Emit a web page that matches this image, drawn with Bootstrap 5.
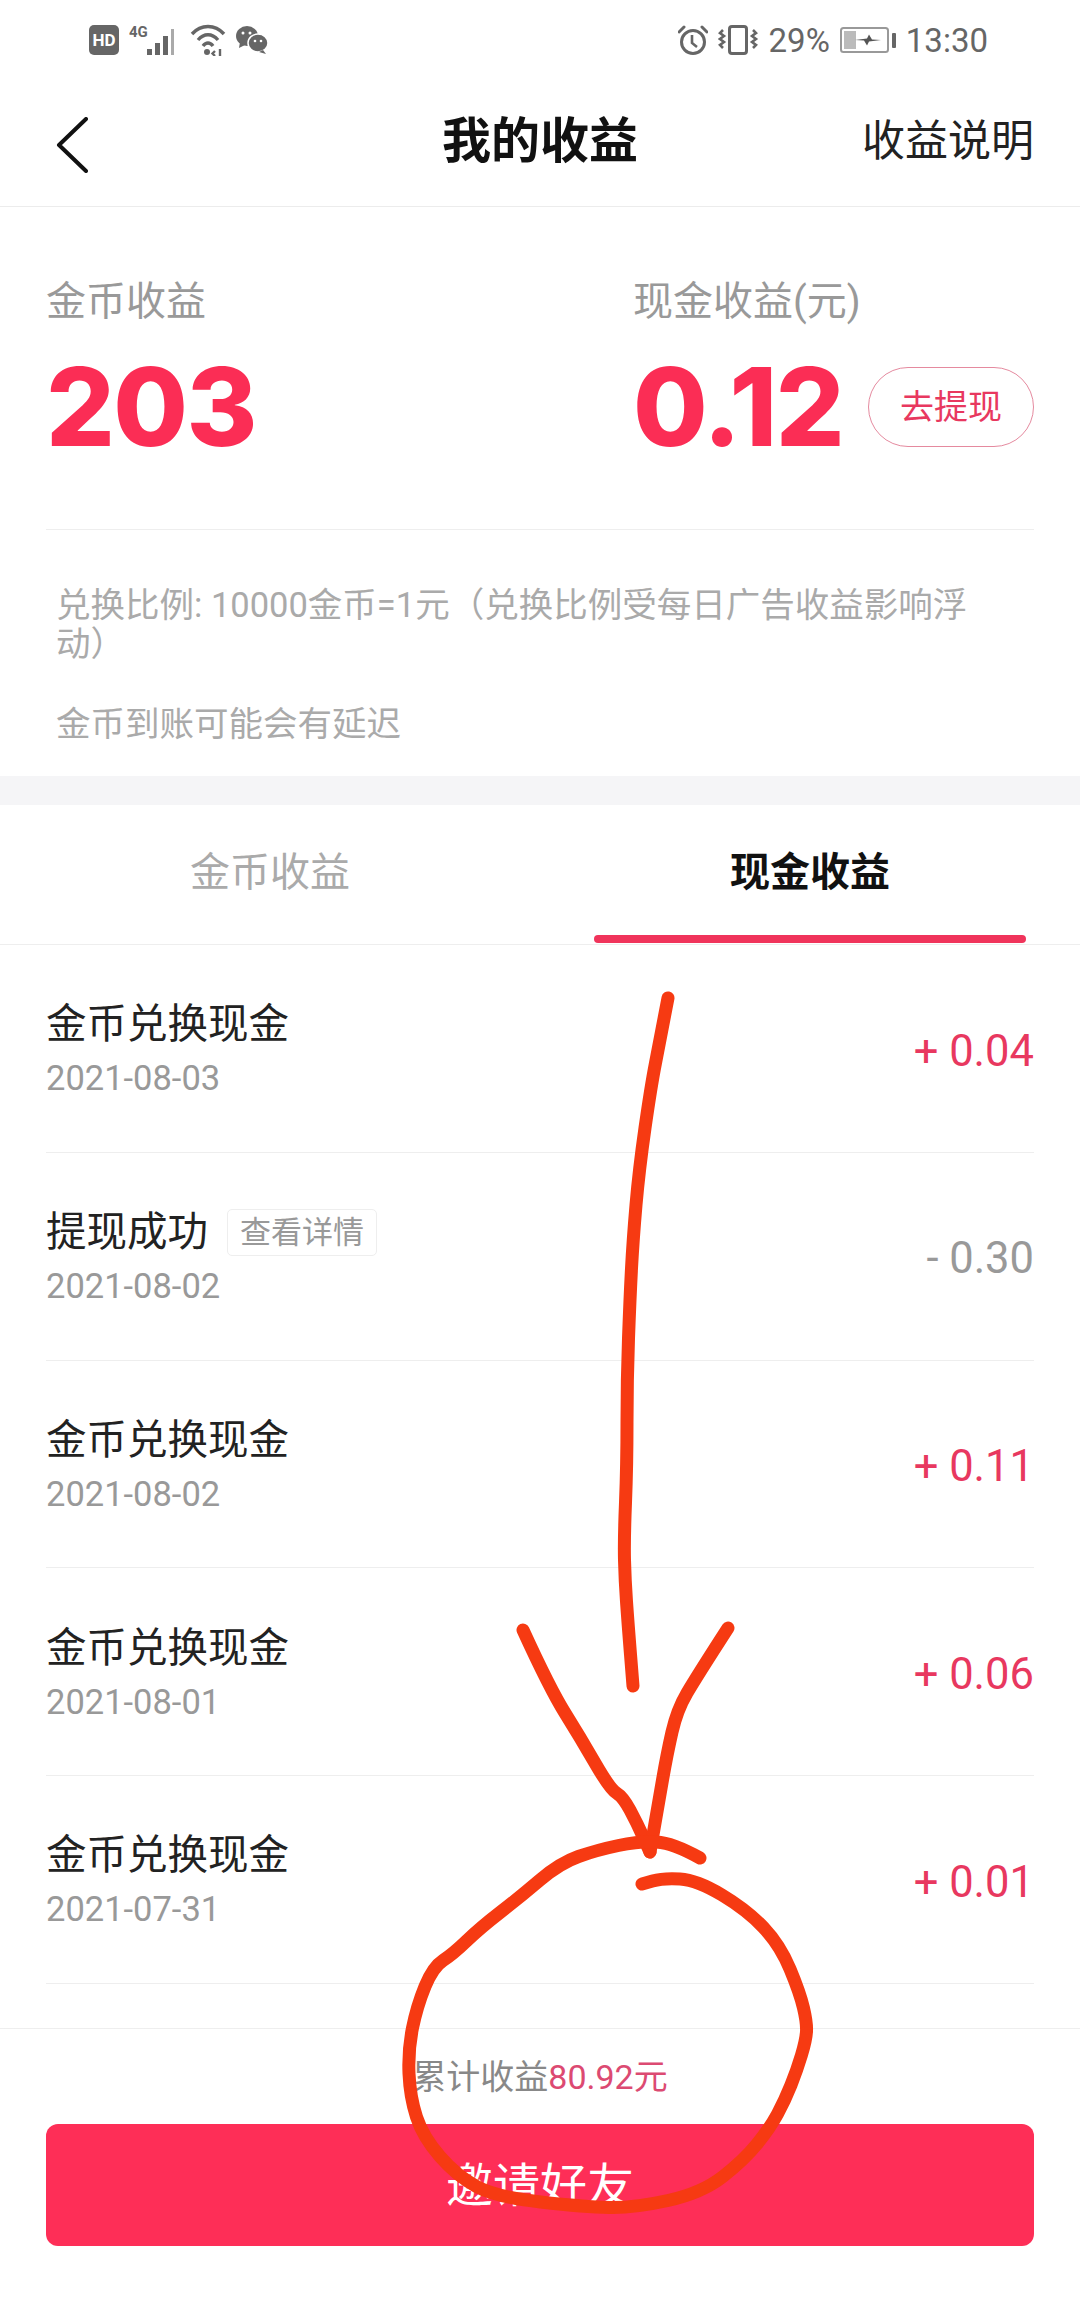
<!DOCTYPE html>
<html lang="zh-CN">
<head>
    <meta charset="UTF-8">
    <meta name="viewport" content="width=device-width, initial-scale=1.0">
    <title>我的收益</title>
    <link href="https://cdn.jsdelivr.net/npm/bootstrap@5.3.0/dist/css/bootstrap.min.css" rel="stylesheet">
    <style>
        body {
            width: 1080px;
            height: 2313px;
            overflow: hidden;
            position: relative;
            background: #fff;
            font-family: Roboto, "Noto Sans CJK SC", sans-serif;
        }
        .status-bar {
            height: 80px;
            padding: 0 92px 0 89px;
            color: #666;
            font-size: 33px;
            line-height: 1;
        }
        .status-group { gap: 10px; }
        .hd-tag {
            width: 30px;
            height: 30px;
            border-radius: 5px;
            background: #666;
            color: #fff;
            font-size: 17px;
            font-weight: 700;
        }
        .top-nav {
            height: 127px;
            padding: 0 46px 3px;
            border-bottom: 1px solid #ececec;
        }
        .top-nav-side { width: 200px; }
        .back-arrow { display: block; margin: 7px 0 0 10px; }
        .top-nav-title { font-size: 49px; font-weight: 700; color: #111; line-height: 1; }
        .top-nav-link { font-size: 43px; color: #222; line-height: 1; text-align: right; }
        .summary { padding: 67px 46px 0; }
        .summary-left { width: 587px; }
        .summary-label { font-size: 40px; line-height: 56px; color: #999; }
        .summary-num {
            font-family: Inter, Roboto, sans-serif;
            font-size: 108px;
            font-weight: 800;
            line-height: 108px;
            letter-spacing: -1.500px;
            color: #fb2d55;
            margin-top: 23px;
        }
        .cash-btn {
            width: 166px;
            height: 80px;
            border: 1px solid #e58a9f;
            border-radius: 40px;
            color: #e8385f;
            font-size: 34px;
            line-height: 1;
            margin-top: 37px;
        }
        .summary-rule { height: 1px; background: #eee; margin-top: 68px; }
        .notes { padding: 56px 100px 32px 56px; color: #aaa; font-size: 34.500px; line-height: 39px; }
        .notes p { margin: 0 0 41px; }
        .notes p:last-child { margin-bottom: 0; }
        .band { height: 29px; background: #f5f5f7; }
        .tabs-bar { height: 140px; border-bottom: 1px solid #eee; padding: 0 54px; gap: 108px; }
        .tab-item { flex: 1 1 0; font-size: 40px; color: #aaa; position: relative; padding-bottom: 4px; }
        .tab-item.is-on { color: #111; font-weight: 700; }
        .tab-item.is-on::after {
            content: "";
            position: absolute;
            left: 0;
            right: 0;
            bottom: 1px;
            height: 8px;
            border-radius: 4px;
            background: #f0345b;
        }
        .records { flex: 1 1 0; min-height: 0; overflow: hidden; padding: 0 46px; }
        .record-row { height: 207.750px; padding-top: 6px; border-bottom: 1px solid #eee; }
        .record-title { font-size: 40.500px; line-height: 54px; color: #222; }
        .record-date { font-size: 34.500px; line-height: 54px; color: #999; }
        .detail-chip {
            height: 47px;
            padding: 0 12px;
            margin-left: 19px;
            border: 1px solid #eee;
            border-radius: 5px;
            font-size: 31px;
            line-height: 1;
            color: #999;
        }
        .record-amt { font-size: 43.500px; line-height: 1; }
        .amt-in { color: #e8385f; }
        .amt-out { color: #999; }
        .bottom-bar { border-top: 1px solid #eee; padding: 0 46px 67px; }
        .total-line { height: 95px; font-size: 34px; color: #888; line-height: 1; }
        .total-line span { color: #dc4a72; }
        .invite-btn {
            height: 122px;
            border-radius: 12px;
            background: #fe2e57;
            color: #fff;
            font-size: 47px;
            line-height: 1;
        }
        .scribble {
            position: absolute;
            left: 0;
            top: 0;
            width: 1080px;
            height: 2313px;
            pointer-events: none;
        }
        .scribble path {
            fill: none;
            stroke: #f63a12;
            stroke-width: 13;
            stroke-linecap: round;
            stroke-linejoin: round;
        }
    </style>
</head>
<body class="d-flex flex-column">

    <!-- barre d'état -->
    <div class="status-bar d-flex justify-content-between align-items-center flex-shrink-0">
        <div class="status-group d-flex align-items-center">
            <span class="hd-tag d-flex align-items-center justify-content-center">HD</span>
            <svg width="51" height="32" viewBox="0 0 51 32" fill="#666">
                <text x="0" y="13" font-family="Roboto" font-size="15" font-weight="700">4G</text>
                <rect x="18" y="25" width="5" height="6"/>
                <rect x="26" y="19" width="5" height="12"/>
                <rect x="34" y="12" width="5" height="19"/>
                <rect x="42" y="5" width="3" height="26" fill="#aaa"/>
            </svg>
            <svg width="36" height="32" viewBox="0 0 36 32" fill="none" stroke="#666" stroke-width="3.4">
                <path d="M2 10 C11 0 25 0 34 10"/>
                <path d="M8 16 C14 9 22 9 28 16"/>
                <path d="M13 22 C16 18 20 18 23 22"/>
                <circle cx="17" cy="28" r="3" fill="#666" stroke="none"/>
                <path d="M25 27 l-2.500 2.500 l2.500 2.500 M30 25 v7" stroke-width="2.400"/>
            </svg>
            <svg width="32" height="28" viewBox="0 0 32 28" fill="#666">
                <ellipse cx="11" cy="10" rx="11" ry="10"/>
                <path d="M4 16 l-1 6 l6 -3z"/>
                <ellipse cx="22" cy="17" rx="10" ry="9" stroke="#fff" stroke-width="1.500"/>
                <path d="M27 24 l3 4 l-7 -2z"/>
                <circle cx="7" cy="7" r="1.500" fill="#fff"/>
                <circle cx="14" cy="7" r="1.500" fill="#fff"/>
                <circle cx="19" cy="15" r="1.300" fill="#fff"/>
                <circle cx="25" cy="15" r="1.300" fill="#fff"/>
            </svg>
        </div>
        <div class="status-group d-flex align-items-center">
            <svg width="30" height="30" viewBox="0 0 30 30" fill="none" stroke="#666" stroke-width="3">
                <circle cx="15" cy="17" r="11.500"/>
                <path d="M14 10 v8 l5 4" stroke-width="2.600"/>
                <path d="M1 7 L6 2 M29 7 L24 2" stroke-linecap="round"/>
            </svg>
            <svg width="41" height="30" viewBox="0 0 41 30" fill="none" stroke="#666" stroke-width="2.600">
                <rect x="11.500" y="1.500" width="17" height="27" rx="2.500" stroke-width="3"/>
                <path d="M5 5 l-3 3 l4 3 l-4 3 l4 3 l-4 3 l3 3"/>
                <path d="M35 5 l3 3 l-4 3 l4 3 l-4 3 l4 3 l-3 3"/>
            </svg>
            <span>29%</span>
            <svg width="56" height="26" viewBox="0 0 56 26">
                <rect x="1" y="1" width="47" height="24" rx="2.500" fill="none" stroke="#999" stroke-width="2"/>
                <rect x="4" y="4" width="12" height="18" fill="#bbb"/>
                <path d="M15 13 l12 -1.500 l2 -4 l3 5 l9 0.500 l-12 1.500 l-2 4 l-3 -5z" fill="#555"/>
                <rect x="52" y="6" width="4" height="15" rx="1" fill="#666"/>
            </svg>
            <span>13:30</span>
        </div>
    </div>

    <!-- navigation -->
    <div class="top-nav d-flex justify-content-between align-items-center flex-shrink-0">
        <div class="top-nav-side">
            <svg class="back-arrow" width="32" height="56" viewBox="0 0 32 56" fill="none" stroke="#111" stroke-width="4" stroke-linecap="round" stroke-linejoin="round">
                <path d="M30 2 L3 28 L30 54"/>
            </svg>
        </div>
        <div class="top-nav-title">我的收益</div>
        <div class="top-nav-side top-nav-link">收益说明</div>
    </div>

    <!-- soldes -->
    <div class="summary flex-shrink-0">
        <div class="d-flex">
            <div class="summary-left">
                <div class="summary-label">金币收益</div>
                <div class="summary-num">203</div>
            </div>
            <div class="flex-grow-1">
                <div class="summary-label">现金收益(元)</div>
                <div class="d-flex justify-content-between align-items-start">
                    <div class="summary-num">0.12</div>
                    <div class="cash-btn d-flex align-items-center justify-content-center">去提现</div>
                </div>
            </div>
        </div>
        <div class="summary-rule"></div>
    </div>

    <div class="notes flex-shrink-0">
        <p>兑换比例: 10000金币=1元（兑换比例受每日广告收益影响浮动）</p>
        <p>金币到账可能会有延迟</p>
    </div>

    <div class="band flex-shrink-0"></div>

    <!-- onglets -->
    <div class="tabs-bar d-flex align-items-stretch flex-shrink-0">
        <div class="tab-item d-flex align-items-center justify-content-center">金币收益</div>
        <div class="tab-item is-on d-flex align-items-center justify-content-center">现金收益</div>
    </div>

    <!-- historique -->
    <div class="records" id="records"></div>

    <div class="bottom-bar flex-shrink-0">
        <div class="total-line d-flex align-items-center justify-content-center">累计收益<span>80.92元</span></div>
        <div class="invite-btn d-flex align-items-center justify-content-center">邀请好友</div>
    </div>

    <!-- annotation à la main -->
    <svg class="scribble" viewBox="0 0 1080 2313" id="scribble"></svg>

    <script>
        const records = [
            { title: '金币兑换现金', date: '2021-08-03', amount: '+ 0.04' },
            { title: '提现成功', date: '2021-08-02', amount: '- 0.30', chip: true },
            { title: '金币兑换现金', date: '2021-08-02', amount: '+ 0.11' },
            { title: '金币兑换现金', date: '2021-08-01', amount: '+ 0.06' },
            { title: '金币兑换现金', date: '2021-07-31', amount: '+ 0.01' }
        ];

        document.getElementById('records').innerHTML = records.map(r => `
            <div class="record-row d-flex justify-content-between align-items-center">
                <div>
                    <div class="record-title d-flex align-items-center">${r.title}${r.chip ? '<span class="detail-chip d-flex align-items-center">查看详情</span>' : ''}</div>
                    <div class="record-date">${r.date}</div>
                </div>
                <div class="record-amt ${r.amount[0] === '+' ? 'amt-in' : 'amt-out'}">${r.amount}</div>
            </div>`).join('');

        // Traits rouges : points relevés sur la capture, lissés par les milieux
        const strokes = [
            [[668,998],[660,1040],[651,1086],[639,1170],[633,1240],[630,1297],[627,1380],[627,1465],[624,1540],[625,1580],[628,1623],[633,1686]],
            [[523,1630],[550,1689],[580,1737],[610,1789],[623,1797],[637,1823],[650,1852]],
            [[728,1628],[697,1676],[677,1710],[667,1754],[658,1806],[650,1852]],
            [[700,1858],[673,1843],[640,1841],[597,1850],[560,1863],[520,1897],[480,1928],[453,1954],[433,1967],[417,2006],[408,2050],[410,2097],[423,2137],[457,2176],[496,2197],[585,2207],[634,2208],[702,2193],[744,2160],[770,2128],[785,2100],[797,2070],[806,2040],[807,2023],[800,1993],[780,1945],[747,1910],[697,1880],[663,1878],[642,1884]]
        ];

        function smooth(pts) {
            let d = `M${pts[0][0]} ${pts[0][1]}`;
            for (let i = 1; i < pts.length - 1; i++) {
                const mx = (pts[i][0] + pts[i + 1][0]) / 2;
                const my = (pts[i][1] + pts[i + 1][1]) / 2;
                d += ` Q${pts[i][0]} ${pts[i][1]} ${mx} ${my}`;
            }
            const last = pts[pts.length - 1];
            return d + ` L${last[0]} ${last[1]}`;
        }

        document.getElementById('scribble').innerHTML = strokes.map(s => `<path d="${smooth(s)}"/>`).join('');
    </script>

    <script src="https://cdn.jsdelivr.net/npm/bootstrap@5.3.0/dist/js/bootstrap.bundle.min.js"></script>
</body>
</html>
